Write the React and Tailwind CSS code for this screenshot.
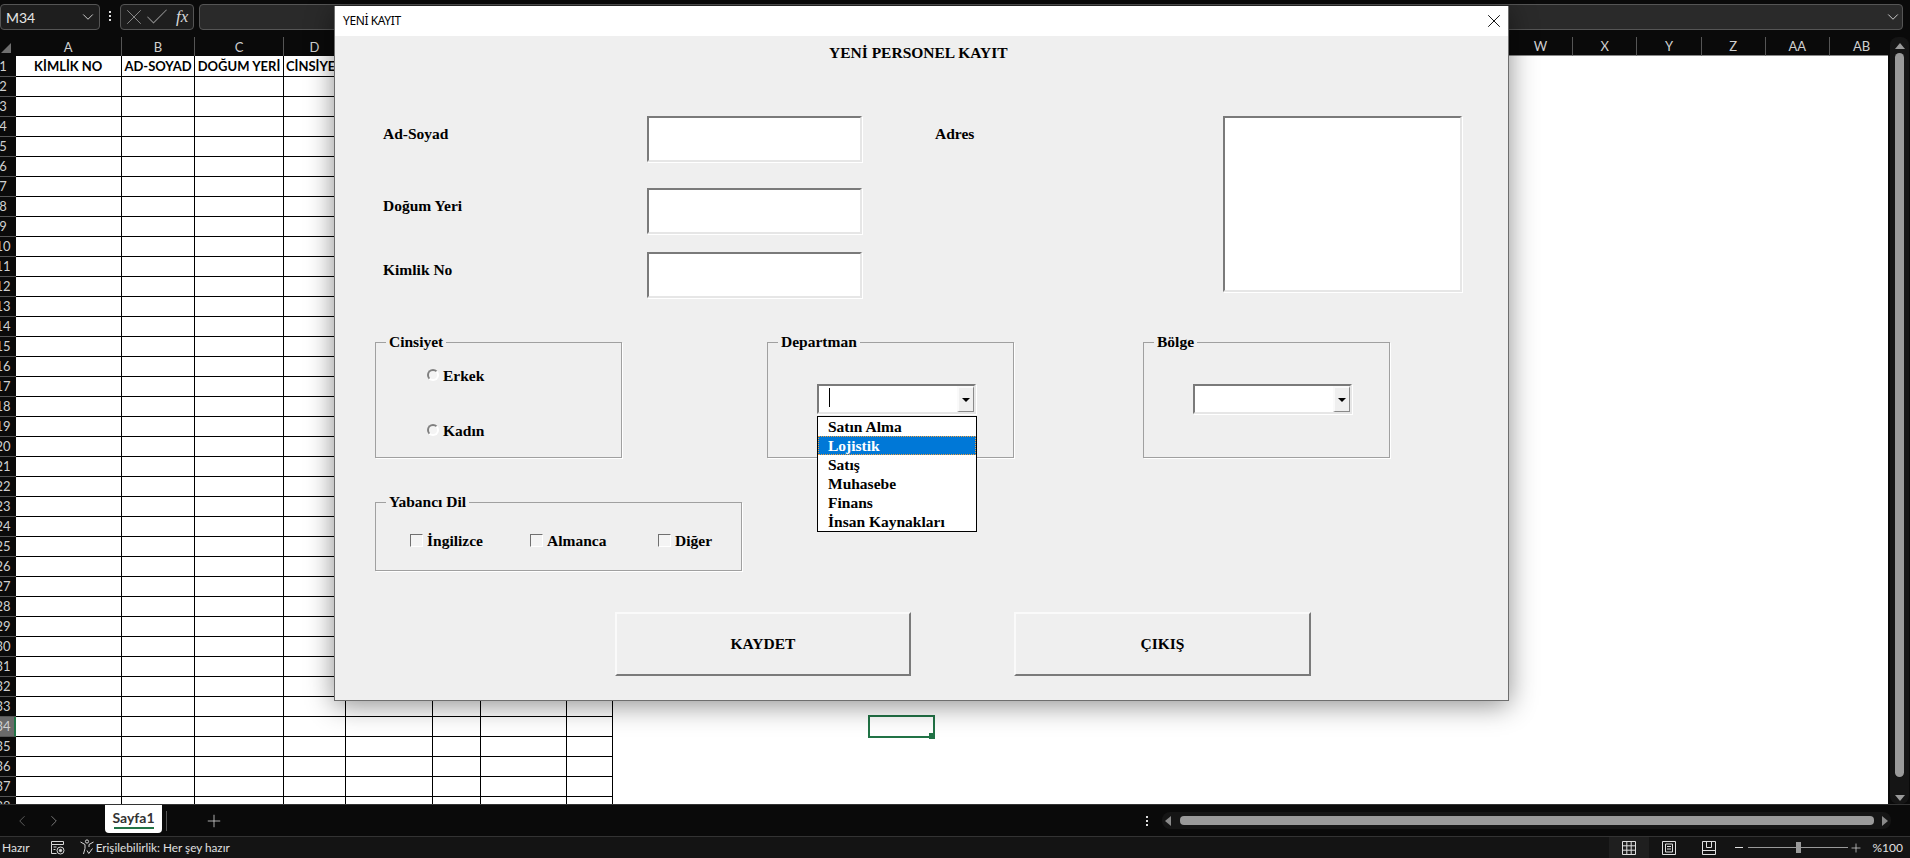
import React from 'react';
import { ChevronDown, ChevronLeft, ChevronRight, Check, Plus, X } from 'lucide-react';

const sansFont = "font-['Lato','Liberation_Sans',sans-serif]";
const serifFont = "font-['Liberation_Serif','Times_New_Roman',serif]";

const columns = ['A', 'B', 'C', 'D', 'E', 'F', 'G', 'H', 'I', 'J', 'K', 'L', 'M', 'N', 'O', 'P', 'Q', 'R', 'S', 'T', 'U', 'V', 'W', 'X', 'Y', 'Z', 'AA', 'AB'];
const headers = ['KİMLİK NO', 'AD-SOYAD', 'DOĞUM YERİ', 'CİNSİYET'];
const rows = Array.from({ length: 38 }, (_, i) => i + 1);

const sunken = 'border-2 border-t-[#7a7a7a] border-l-[#7a7a7a] border-r-[#e6e6e6] border-b-[#e6e6e6] bg-white shadow-[1px_1px_0_#ffffff]';
const raised = 'border-2 border-t-[#fafafa] border-l-[#fafafa] border-r-[#7a7a7a] border-b-[#7a7a7a] bg-[#efefef]';

const Toolbar = () => (
    <div className={`flex items-start h-[37px] pt-[4px] shrink-0 ${sansFont}`}>
        <div className="flex items-center justify-between w-[100px] h-[26px] pl-[5px] pr-[2px] rounded-[4px] border border-[#555555] bg-[#1e1e1e] text-[#e6e6e6] text-[14px]">
            M34
            <ChevronDown size={18} strokeWidth={1.3} className="text-[#cfcfcf]" />
        </div>
        <div className="flex flex-col gap-[2px] items-center w-[20px] pt-[7px]">
            <span className="w-[2px] h-[2px] bg-[#dddddd]" />
            <span className="w-[2px] h-[2px] bg-[#dddddd]" />
            <span className="w-[2px] h-[2px] bg-[#dddddd]" />
        </div>
        <div className="flex items-center w-[74px] h-[26px] rounded-[4px] border border-[#555555] bg-[#1e1e1e]">
            <X size={26} strokeWidth={0.9} className="shrink-0 text-[#8a8a8a]" />
            <Check size={28} strokeWidth={0.9} className="shrink-0 -ml-[4px] text-[#8a8a8a]" />
            <span className={`${serifFont} ml-[5px] italic text-[17px] text-[#d8d8d8]`}>fx</span>
        </div>
        <div className="flex items-center justify-end w-[1704px] ml-[5px] h-[26px] rounded-[4px] border border-[#555555] bg-[#2a2a2a]">
            <ChevronDown size={18} strokeWidth={1.3} className="text-[#cfcfcf]" />
        </div>
    </div>
);

const Sheet = () => (
    <div className={`grid grid-cols-[15.5px_106.5px_73px_89px_62px_87px_48px_86px_46px_repeat(14,64px)_repeat(6,64.2px)] auto-rows-[20px] w-[1888px] h-[767px] overflow-hidden ${sansFont}`}>
        <div className="relative h-[19px] bg-[#0a0a0a]">
            <div className="absolute left-[1px] top-[6px] w-0 h-0 border-l-[10px] border-l-transparent border-b-[10px] border-b-[#6f6f6f]" />
        </div>
        {columns.map((c, i) => (
            <div
                key={c}
                className={`flex items-center justify-center h-[19px] pt-[2px] bg-[#0a0a0a] border-r border-[#555555] text-[13px] text-[#d0d0d0] ${i >= 8 ? 'border-b border-b-[#8a8a8a]' : ''}`}
            >
                {c}
            </div>
        ))}
        {rows.map((r) => (
            <React.Fragment key={r}>
                <div className={`flex items-center overflow-hidden border-b border-[#555555] text-[13px] text-[#d0d0d0] ${r === 1 ? '-mt-[1px] h-[21px] pt-[2px]' : 'h-[20px] pt-[1px]'} ${r === 34 ? 'bg-[#6a6a6a] border-r-2 border-r-[#217346]' : 'bg-[#0a0a0a]'}`}>
                    <span className="shrink-0 w-[26px] -ml-[10px] text-center">{r}</span>
                </div>
                {columns.map((c, i) => {
                    const bordered = i < 8;
                    return (
                        <div
                            key={c}
                            className={`relative flex items-center justify-center bg-white text-[13px] font-bold text-black whitespace-nowrap ${r === 1 ? '-mt-[1px] h-[21px] pt-[2px]' : 'h-[20px]'} ${bordered ? 'border-r border-b border-black' : ''}`}
                        >
                            {r === 1 && headers[i]}
                            {r === 34 && c === 'M' && (
                                <div className="absolute -left-[1px] -top-[2px] w-[67px] h-[23px] border-2 border-[#217346] z-10">
                                    <span className="absolute -right-[2px] -bottom-[3px] w-[6px] h-[6px] bg-[#217346]" />
                                </div>
                            )}
                        </div>
                    );
                })}
            </React.Fragment>
        ))}
    </div>
);

const VScroll = () => (
    <div className="flex flex-col items-center w-[19px] h-[767px] ml-[2px] rounded-[8px] bg-[#151515]">
        <span className="mt-[6px] w-0 h-0 border-x-[5px] border-x-transparent border-b-[6px] border-b-[#9a9a9a]" />
        <div className="mt-[4px] w-[9px] h-[724px] rounded-[5px] bg-[#9a9a9a]" />
        <span className="mt-auto mb-[3px] w-0 h-0 border-x-[5px] border-x-transparent border-t-[6px] border-t-[#9a9a9a]" />
    </div>
);

const TabBar = () => (
    <div className={`flex items-center h-[32px] shrink-0 border-t border-[#333333] bg-[#0a0a0a] ${sansFont}`}>
        <ChevronLeft size={18} strokeWidth={1} className="ml-[13px] text-[#777777]" />
        <ChevronRight size={18} strokeWidth={1} className="ml-[14px] text-[#999999]" />
        <div className="self-start flex flex-col items-center w-[57px] h-[28px] ml-[42px] pt-[2px] rounded-b-[4px] bg-white text-[14px] font-bold text-[#333333]">
            Sayfa1
            <span className="w-[40px] h-[2px] bg-[#217346] -mt-[1px]" />
        </div>
        <span className="w-px h-[20px] ml-[4px] bg-[#555555]" />
        <Plus size={20} strokeWidth={1} className="ml-[37px] text-[#cfcfcf]" />
        <div className="flex flex-col gap-[2px] items-center w-[3px] ml-[921px]">
            <span className="w-[2px] h-[2px] bg-[#dddddd]" />
            <span className="w-[2px] h-[2px] bg-[#dddddd]" />
            <span className="w-[2px] h-[2px] bg-[#dddddd]" />
        </div>
        <div className="flex items-center justify-between w-[729px] h-[17px] ml-[14px] px-[3px] rounded-[8px] bg-[#151515]">
            <span className="w-0 h-0 border-y-[5px] border-y-transparent border-r-[6px] border-r-[#8a8a8a]" />
            <div className="w-[694px] h-[9px] rounded-[4px] bg-[#9a9a9a]" />
            <span className="w-0 h-0 border-y-[5px] border-y-transparent border-l-[6px] border-l-[#8a8a8a]" />
        </div>
    </div>
);

const StatusBar = () => (
    <div className={`flex items-center h-[22px] shrink-0 border-t border-[#333333] bg-[#141414] text-[12px] text-[#e0e0e0] ${sansFont}`}>
        <span className="ml-[2px]">Hazır</span>
        <svg width="15" height="15" viewBox="0 0 15 15" fill="none" stroke="#d8d8d8" strokeWidth="1" className="ml-[20px]">
            <path d="M1.5 1.5h12v3h-12zM1.5 4.5v9h5" />
            <path d="M3.5 7h3M3.5 9.5h2" />
            <circle cx="10.5" cy="10.5" r="3.5" />
            <circle cx="10.5" cy="10.5" r="1.2" fill="#d8d8d8" />
        </svg>
        <svg width="16" height="17" viewBox="0 0 16 17" fill="none" stroke="#d8d8d8" strokeWidth="1" className="ml-[14px]">
            <circle cx="8" cy="2.5" r="1.6" />
            <path d="M1.5 3l4.5 2.5v4L4.5 15M14.5 3L10 5.5v2.5" />
            <path d="M8 11.5l1.8 3 3.7-5" />
        </svg>
        <span className="ml-[1px] text-[11.75px]">Erişilebilirlik: Her şey hazır</span>
        <div className="flex items-center h-full ml-auto">
            <div className="flex items-center justify-center w-[40px] h-full bg-[#1f1f1f]">
                <svg width="14" height="14" viewBox="0 0 14 14" fill="none" stroke="#e0e0e0" strokeWidth="1">
                    <path d="M.5.5h13v13H.5zM.5 4.8h13M.5 9.2h13M4.8.5v13M9.2.5v13" />
                </svg>
            </div>
            <svg width="14" height="14" viewBox="0 0 14 14" fill="none" stroke="#e0e0e0" strokeWidth="1" className="ml-[13px]">
                <path d="M.5.5h13v13H.5zM3.5 3h7v8h-7zM5 5.5h4M5 8h4" />
            </svg>
            <svg width="14" height="14" viewBox="0 0 14 14" fill="none" stroke="#e0e0e0" strokeWidth="1" className="ml-[26px]">
                <path d="M.5.5h13v13H.5zM.5 9.5h13M4.5.5v6h5v-6" />
            </svg>
            <span className="w-[8px] h-px ml-[19px] bg-[#e0e0e0]" />
            <div className="relative w-[100px] h-px ml-[5px] bg-[#9a9a9a]">
                <span className="absolute left-[48px] -top-[5px] w-[5px] h-[11px] bg-[#9a9a9a]" />
            </div>
            <Plus size={14} strokeWidth={1.2} className="ml-[1px] text-[#e0e0e0]" />
            <span className="ml-[10px] mr-[7px]">%100</span>
        </div>
    </div>
);

const Label = ({ children, className = '' }) => (
    <div className={`h-[20px] leading-[20px] text-[15.5px] font-bold text-black whitespace-nowrap ${className}`}>{children}</div>
);

const FieldRow = ({ label, className = '' }) => (
    <div className={`flex ${className}`}>
        <Label className="w-[264px] mt-[8px]">{label}</Label>
        <input readOnly className={`w-[215px] h-[46px] outline-none ${sunken}`} />
    </div>
);

const Group = ({ title, className = '', children }) => (
    <fieldset className={`min-w-0 border border-[#a0a0a0] shadow-[1px_1px_0_#ffffff] ${className}`}>
        <legend className="ml-[10px] px-[3px] h-[18px] leading-[18px] text-[15.5px] font-bold text-black">{title}</legend>
        {children}
    </fieldset>
);

const Radio = ({ label, className = '' }) => (
    <div className={`flex items-center gap-[4px] h-[20px] ${className}`}>
        <span className="w-[12px] h-[12px] -mt-[2px] rounded-full border-2 border-t-[#808080] border-l-[#808080] border-r-white border-b-white bg-[#f4f4f4]" />
        <Label>{label}</Label>
    </div>
);

const CheckItem = ({ label, className = '' }) => (
    <div className={`flex items-center gap-[4px] h-[20px] ${className}`}>
        <span className="w-[13px] h-[13px] -mt-[2px] border border-t-[#707070] border-l-[#707070] border-r-white border-b-white bg-[#f4f4f4]" />
        <Label>{label}</Label>
    </div>
);

const Combo = ({ children }) => (
    <div className={`relative flex w-[159px] h-[30px] ${sunken}`}>
        {children}
        <div className="flex items-center justify-center w-[17px] h-full ml-auto bg-[#efefef] border-l-2 border-t-2 border-[#fafafa] border-r border-b border-r-[#8a8a8a] border-b-[#8a8a8a]">
            <span className="w-0 h-0 border-x-[4px] border-x-transparent border-t-[4px] border-t-black" />
        </div>
    </div>
);

const departments = ['Satın Alma', 'Lojistik', 'Satış', 'Muhasebe', 'Finans', 'İnsan Kaynakları'];

const Dialog = () => (
    <div className={`absolute left-[334px] top-[6px] w-[1175px] h-[695px] z-20 border-x border-b border-[#6e6e6e] bg-[#efefef] shadow-[0_4px_26px_rgba(0,0,0,0.45)] ${serifFont}`}>
        <div className="flex items-center justify-between h-[30px] pl-[8px] pr-[3px] bg-white">
            <span className={`text-[12px] text-black font-['Noto_Sans',sans-serif] tracking-[-0.4px]`}>YENİ KAYIT</span>
            <X size={22} strokeWidth={1} className="text-black" />
        </div>

        <div className="pl-[494px] pt-[7px]">
            <Label className="text-[14.67px]">YENİ PERSONEL KAYIT</Label>
        </div>

        <div className="flex mt-[53px] ml-[48px]">
            <div className="flex flex-col">
                <FieldRow label="Ad-Soyad" />
                <FieldRow label="Doğum Yeri" className="mt-[26px]" />
                <FieldRow label="Kimlik No" className="mt-[18px]" />
            </div>
            <Label className="w-[288px] ml-[73px] mt-[8px]">Adres</Label>
            <textarea readOnly className={`w-[239px] h-[176px] outline-none resize-none ${sunken}`} />
        </div>

        <div className="flex mt-[35px] ml-[40px]">
            <Group title="Cinsiyet" className="w-[247px] h-[125px]">
                <div className="pl-[51px] pt-[15px]">
                    <Radio label="Erkek" />
                    <Radio label="Kadın" className="mt-[35px]" />
                </div>
            </Group>
            <Group title="Departman" className="w-[247px] h-[125px] ml-[145px]">
                <div className="pl-[49px] pt-[33px]">
                    <Combo>
                        <span className="w-px h-[19px] mt-[2px] ml-[10px] bg-black" />
                        <div className="absolute -left-[2px] top-[30px] w-[160px] h-[116px] z-30 border border-black bg-white">
                            {departments.map((d) => (
                                <div
                                    key={d}
                                    className={`h-[19px] pl-[10px] leading-[19px] text-[15.5px] font-bold ${d === 'Lojistik' ? 'bg-[#0078d7] text-white outline-1 outline-dotted -outline-offset-1 outline-[#f0a040]' : 'text-black'}`}
                                >
                                    {d}
                                </div>
                            ))}
                        </div>
                    </Combo>
                </div>
            </Group>
            <Group title="Bölge" className="w-[247px] h-[125px] ml-[129px]">
                <div className="pl-[49px] pt-[33px]">
                    <Combo />
                </div>
            </Group>
        </div>

        <Group title="Yabancı Dil" className="w-[367px] h-[78px] mt-[35px] ml-[40px]">
            <div className="flex pl-[34px] pt-[20px]">
                <CheckItem label="İngilizce" className="w-[120px]" />
                <CheckItem label="Almanca" className="w-[128px]" />
                <CheckItem label="Diğer" />
            </div>
        </Group>

        <div className="flex gap-[103px] mt-[41px] ml-[280px]">
            <button className={`w-[296px] h-[64px] text-[15.5px] font-bold text-black ${raised}`}>KAYDET</button>
            <button className={`w-[297px] h-[64px] text-[15.5px] font-bold text-black ${raised}`}>ÇIKIŞ</button>
        </div>
    </div>
);

const App = () => (
    <div className="relative flex flex-col w-[1910px] h-[858px] overflow-hidden bg-[#0a0a0a]">
        <Toolbar />
        <div className="flex h-[767px] shrink-0">
            <Sheet />
            <VScroll />
        </div>
        <TabBar />
        <StatusBar />
        <Dialog />
    </div>
);

export default App;
